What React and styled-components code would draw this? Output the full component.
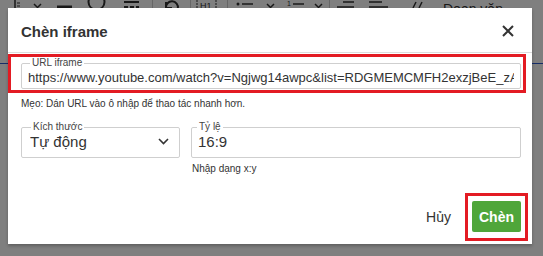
import React from 'react';
import styled, { createGlobalStyle } from 'styled-components';

const Global = createGlobalStyle`
  html, body { margin: 0; padding: 0; width: 543px; height: 256px; overflow: hidden; background: #fff; }
  body { font-family: "Liberation Sans", Arial, sans-serif; }
  * { box-sizing: border-box; }
`;

const Page = styled.div`
  position: relative;
  width: 543px;
  height: 256px;
  overflow: hidden;
  background: #fff;
`;

const Toolbar = styled.div`
  display: flex;
  align-items: flex-end;
  height: 16px;
  color: #333;
`;

const Tool = styled.div`
  margin-left: ${p => p.$ml}px;
  flex: none;
  display: flex;
`;

const Sep = styled.div`
  margin-left: ${p => p.$ml}px;
  width: 1px;
  height: 16px;
  background: #ccc;
`;

const ToolText = styled.span`
  margin-left: ${p => p.$ml}px;
  font-size: 14px;
  line-height: 14px;
  color: #333;
`;

const Editor = styled.div`
  margin-top: 47px;
  border-top: 1px solid #2d5bd0;
`;

const Overlay = styled.div`
  position: absolute;
  inset: 0;
  background: rgba(0, 0, 0, 0.5);
  padding: 8px 0 0 8px;
`;

const Modal = styled.div`
  width: 524px;
  height: 236px;
  background: #fff;
  box-shadow: 0 2px 3px rgba(0, 0, 0, 0.25);
  display: flex;
  flex-direction: column;
`;

const Header = styled.div`
  height: 45px;
  flex: none;
  display: flex;
  align-items: center;
  justify-content: space-between;
  padding: 2px 18px 0 13px;
  border-bottom: 1px solid #dcdcdc;
`;

const Title = styled.h2`
  margin: 0;
  font-size: 15px;
  font-weight: bold;
  color: #333;
`;

const Close = styled.button`
  border: 0;
  background: none;
  padding: 0;
  width: 12px;
  height: 12px;
  display: flex;
`;

const Body = styled.div`
  padding: 0 6px 0 0;
  display: flex;
  flex-direction: column;
`;

const Highlight = styled.div`
  border: 3px solid #e31b23;
  margin-top: 1px;
  padding: 1px 2px 1px 10px;
`;

const Field = styled.fieldset`
  margin: 0;
  border: 1px solid #cfcfcf;
  border-radius: 2px;
  padding: 0 ${p => p.$pr || 6}px 0 ${p => p.$pl || 6}px;
  min-width: 0;
  width: ${p => (p.$w ? `${p.$w}px` : 'auto')};
  height: ${p => p.$h || 36}px;
  display: flex;
  align-items: center;
`;

const Legend = styled.legend`
  font-size: 10px;
  line-height: 10px;
  color: #444;
  padding: 0 2px;
  margin-left: ${p => p.$ml || 1}px;
`;

const Value = styled.div`
  font-size: ${p => p.$fs || 13}px;
  color: #333;
  white-space: nowrap;
  overflow: hidden;
  flex: 1;
  margin-top: ${p => p.$mt || 0}px;
`;

const Hint = styled.div`
  font-size: 10px;
  line-height: 12px;
  color: #333;
  margin: ${p => p.$m};
`;

const Row = styled.div`
  display: flex;
  gap: 11px;
  padding: 0 5px 0 13px;
  margin-top: 12px;
`;

const Col = styled.div`
  display: flex;
  flex-direction: column;
  flex: ${p => (p.$grow ? 1 : 'none')};
`;

const Chevron = styled.svg`
  flex: none;
  margin-top: 1px;
  margin-right: 4px;
`;

const Footer = styled.div`
  margin-top: auto;
  display: flex;
  justify-content: flex-end;
  align-items: center;
  padding: 0 4px 3px 0;
  gap: 14px;
`;

const TextButton = styled.button`
  border: 0;
  background: none;
  font-family: inherit;
  font-size: 14px;
  color: #333;
  padding: 0;
`;

const HighlightBtn = styled.div`
  border: 3px solid #e31b23;
  padding: 5px 4px 6px 4px;
`;

const PrimaryButton = styled.button`
  border: 0;
  border-radius: 2px;
  background: #4fa63a;
  color: #fff;
  font-family: inherit;
  font-size: 14px;
  font-weight: bold;
  width: 49px;
  height: 31px;
  padding: 0;
  display: block;
`;

const Ico = ({ children, w = 18 }) => (
  <svg width={w} height="16" viewBox={`0 0 ${w} 16`} fill="none" stroke="#333" strokeWidth="2">{children}</svg>
);

const Caret = ({ ml }) => (
  <Tool $ml={ml}>
    <Ico w={9}><path d="M1 4l3.5 3.5L8 4" strokeWidth="1.5" /></Ico>
  </Tool>
);

export default function App() {
  return (
    <Page>
      <Global />
      <Toolbar>
        <Tool $ml={14}><Ico w={8}><path d="M1 0v15h6" strokeWidth="1.5" /><path d="M3 3h3M3 6h3M3 9h3" strokeWidth="1" /></Ico></Tool>
        <Caret ml={11} />
        <Tool $ml={15}><Ico w={15}><path d="M0 7h15" strokeWidth="3" /></Ico></Tool>
        <Tool $ml={15}><Ico w={19}><circle cx="9.5" cy="2" r="8" /></Ico></Tool>
        <Tool $ml={17}><Ico w={17}><path d="M1 2h15M1 7h4M7 7h4M13 7h3" strokeWidth="2" /></Ico></Tool>
        <Sep $ml={12} />
        <Tool $ml={10}><Ico w={17}><path d="M3 8a6 6 0 1 1 4 5M3 2v6h6" strokeWidth="2" /></Ico></Tool>
        <Sep $ml={10} />
        <Tool $ml={5}><Ico w={21}><path d="M1 0v12M20 0v12" strokeWidth="1" strokeDasharray="2 1" /><text x="4" y="9" fontSize="9" fill="#333" stroke="none" fontFamily="Liberation Sans">H1</text></Ico></Tool>
        <Sep $ml={10} />
        <Tool $ml={8}><Ico w={17}><circle cx="2" cy="4" r="1.5" fill="#333" stroke="none" /><path d="M6 4h11" strokeWidth="1.5" /></Ico></Tool>
        <Caret ml={13} />
        <Tool $ml={12}><Ico w={17}><path d="M6 4h11" strokeWidth="1.5" /><text x="0" y="6" fontSize="7" fill="#333" stroke="none" fontFamily="Liberation Sans">1</text></Ico></Tool>
        <Caret ml={10} />
        <Sep $ml={6} />
        <Tool $ml={7}><Ico w={17}><path d="M6 2h11M0 7h17" strokeWidth="1.5" /></Ico></Tool>
        <Tool $ml={15}><Ico w={19}><path d="M0 2h13M0 7h19" strokeWidth="1.5" /></Ico></Tool>
        <Tool $ml={22}><Ico w={13}><path d="M3 8l3-6M9 8l3-6" strokeWidth="1.5" /></Ico></Tool>
        <ToolText $ml={20}>Đoạn văn</ToolText>
      </Toolbar>
      <Editor />
      <Overlay>
        <Modal role="dialog" aria-label="Chèn iframe">
          <Header>
            <Title>Chèn iframe</Title>
            <Close aria-label="Đóng">
              <svg width="12" height="12" viewBox="0 0 12 12" stroke="#333" strokeWidth="2">
                <path d="M1 1l10 10M11 1L1 11" />
              </svg>
            </Close>
          </Header>
          <Body>
            <Highlight>
              <Field $h={31} $pl={6}>
                <Legend $ml={2}>URL iframe</Legend>
                <Value $mt={-2}>https://www.youtube.com/watch?v=Ngjwg14awpc&amp;list=RDGMEMCMFH2exzjBeE_zA</Value>
              </Field>
            </Highlight>
            <Hint $m="5px 0 0 13px">Mẹo: Dán URL vào ô nhập để thao tác nhanh hơn.</Hint>
            <Row>
              <Col>
                <Field $w={159} $pl={8}>
                  <Legend>Kích thước</Legend>
                  <Value $fs={15} $mt={1}>Tự động</Value>
                  <Chevron width="11" height="7" viewBox="0 0 11 7" fill="none" stroke="#333" strokeWidth="1.6">
                    <path d="M1 1l4.5 4.5L10 1" />
                  </Chevron>
                </Field>
              </Col>
              <Col $grow>
                <Field $pl={6}>
                  <Legend $ml={-1}>Tỷ lệ</Legend>
                  <Value $fs={15} $mt={1}>16:9</Value>
                </Field>
                <Hint $m="5px 0 0 1px">Nhập dạng x:y</Hint>
              </Col>
            </Row>
          </Body>
          <Footer>
            <TextButton>Hủy</TextButton>
            <HighlightBtn>
              <PrimaryButton>Chèn</PrimaryButton>
            </HighlightBtn>
          </Footer>
        </Modal>
      </Overlay>
    </Page>
  );
}
